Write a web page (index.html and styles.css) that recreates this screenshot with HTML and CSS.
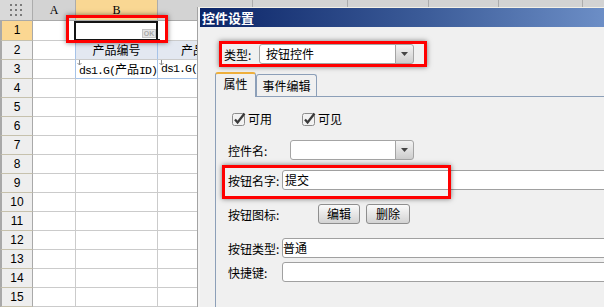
FILE: index.html
```html
<!DOCTYPE html>
<html lang="zh-CN">
<head>
    <meta charset="UTF-8">
    <meta name="viewport" content="width=device-width, initial-scale=1.0">
    <title>控件设置</title>
    <link rel="stylesheet" href="styles.css">
</head>
<body>
    <div class="sheet">
        <div class="sheet__head">
            <div class="col col--corner w-h">
                <svg width="12" height="12" viewBox="0 0 12 12">
                    <g fill="#7b7b7b">
                        <rect x="0" y="0" width="2" height="2"/><rect x="5" y="0" width="2" height="2"/><rect x="10" y="0" width="2" height="2"/>
                        <rect x="0" y="5" width="2" height="2"/><rect x="5" y="5" width="2" height="2"/><rect x="10" y="5" width="2" height="2"/>
                        <rect x="0" y="10" width="2" height="2"/><rect x="5" y="10" width="2" height="2"/><rect x="10" y="10" width="2" height="2"/>
                    </g>
                </svg>
            </div>
            <div class="col w-a">A</div>
            <div class="col col--sel w-b">B</div>
            <div class="col w-c"></div>
            <div class="col w-d"></div>
            <div class="col w-e"></div>
            <div class="col w-f"></div>
            <div class="col w-g"></div>
            <div class="col col--rest"></div>
        </div>

        <div class="row row--first">
            <div class="rh rh--sel">1</div>
            <div class="cell w-a"></div>
            <div class="cell w-b">
                <div class="editor">
                    <span class="editor__ok">OK</span>
                    <i class="editor__handle"></i>
                </div>
                <div class="hl hl--cell"></div>
            </div>
            <div class="cell w-c"></div>
        </div>
        <div class="row">
            <div class="rh">2</div>
            <div class="cell cell--edge w-a"></div>
            <div class="cell cell--title cell--edge w-b">产品编号</div>
            <div class="cell cell--title cell--cut w-c">产品</div>
        </div>
        <div class="row">
            <div class="rh">3</div>
            <div class="cell cell--edge w-a"></div>
            <div class="cell cell--data cell--edge cell--foot w-b">
                <svg class="drop" width="5" height="6" viewBox="0 0 5 6"><path d="M2.5 0v5M0.5 3l2 2 2-2" fill="none" stroke="#8a8a8a"/></svg>
                ds1.G(<span class="cjk">产品</span>ID)
            </div>
            <div class="cell cell--data cell--foot w-c">
                <svg class="drop" width="5" height="6" viewBox="0 0 5 6"><path d="M2.5 0v5M0.5 3l2 2 2-2" fill="none" stroke="#8a8a8a"/></svg>
                ds1.G(
            </div>
        </div>
        <div class="row"><div class="rh">4</div><div class="cell w-a"></div><div class="cell w-b"></div><div class="cell w-c"></div></div>
        <div class="row"><div class="rh">5</div><div class="cell w-a"></div><div class="cell w-b"></div><div class="cell w-c"></div></div>
        <div class="row"><div class="rh">6</div><div class="cell w-a"></div><div class="cell w-b"></div><div class="cell w-c"></div></div>
        <div class="row"><div class="rh">7</div><div class="cell w-a"></div><div class="cell w-b"></div><div class="cell w-c"></div></div>
        <div class="row"><div class="rh">8</div><div class="cell w-a"></div><div class="cell w-b"></div><div class="cell w-c"></div></div>
        <div class="row"><div class="rh">9</div><div class="cell w-a"></div><div class="cell w-b"></div><div class="cell w-c"></div></div>
        <div class="row"><div class="rh">10</div><div class="cell w-a"></div><div class="cell w-b"></div><div class="cell w-c"></div></div>
        <div class="row"><div class="rh">11</div><div class="cell w-a"></div><div class="cell w-b"></div><div class="cell w-c"></div></div>
        <div class="row"><div class="rh">12</div><div class="cell w-a"></div><div class="cell w-b"></div><div class="cell w-c"></div></div>
        <div class="row"><div class="rh">13</div><div class="cell w-a"></div><div class="cell w-b"></div><div class="cell w-c"></div></div>
        <div class="row"><div class="rh">14</div><div class="cell w-a"></div><div class="cell w-b"></div><div class="cell w-c"></div></div>
        <div class="row"><div class="rh">15</div><div class="cell w-a"></div><div class="cell w-b"></div><div class="cell w-c"></div></div>
    </div>

    <div class="dialog">
        <div class="dialog__title">控件设置</div>
        <div class="dialog__body">
            <div class="type-box">
                <span class="type-box__label">类型:</span>
                <div class="combo combo--type">
                    <div class="combo__text">按钮控件</div>
                    <div class="combo__btn">
                        <svg width="7" height="4" viewBox="0 0 7 4"><path d="M0 0h7L3.5 4z" fill="#454545"/></svg>
                    </div>
                </div>
            </div>

            <div class="tabs">
                <div class="tab tab--active">属性</div>
                <div class="tab">事件编辑</div>
            </div>

            <div class="panel">
                <div class="checks">
                    <label class="check">
                        <svg width="14" height="14" viewBox="0 0 14 14"><rect x="0.5" y="1.5" width="12" height="12" rx="2" fill="#f2f2f2" stroke="#8c8c8c"/><path d="M3 7.5l2.6 3L12.5 1.5" fill="none" stroke="#3a3a3a" stroke-width="2.3"/></svg>
                        可用
                    </label>
                    <label class="check">
                        <svg width="14" height="14" viewBox="0 0 14 14"><rect x="0.5" y="1.5" width="12" height="12" rx="2" fill="#f2f2f2" stroke="#8c8c8c"/><path d="M3 7.5l2.6 3L12.5 1.5" fill="none" stroke="#3a3a3a" stroke-width="2.3"/></svg>
                        可见
                    </label>
                </div>

                <div class="form-row form-row--name">
                    <span class="form-row__label label--name">控件名:</span>
                    <div class="combo combo--name">
                        <div class="combo__text"></div>
                        <div class="combo__btn">
                            <svg width="7" height="4" viewBox="0 0 7 4"><path d="M0 0h7L3.5 4z" fill="#454545"/></svg>
                        </div>
                    </div>
                </div>

                <div class="form-row form-row--marked">
                    <span class="form-row__label">按钮名字:</span>
                    <div class="field field--text">提交</div>
                </div>

                <div class="form-row form-row--icon">
                    <span class="form-row__label label--icon">按钮图标:</span>
                    <button class="btn btn--edit">编辑</button>
                    <button class="btn btn--delete">删除</button>
                </div>

                <div class="form-row form-row--kind">
                    <span class="form-row__label">按钮类型:</span>
                    <div class="field field--tight">普通</div>
                </div>

                <div class="form-row form-row--key">
                    <span class="form-row__label">快捷键:</span>
                    <div class="field"></div>
                </div>
            </div>
        </div>
    </div>
</body>
</html>
```

FILE: styles.css
```css
* {
    box-sizing: border-box;
    margin: 0;
    padding: 0;
}

body {
    width: 604px;
    height: 307px;
    overflow: hidden;
    position: relative;
    background-color: #fff;
    font-family: "Noto Sans CJK SC", sans-serif;
    font-size: 12px;
    color: #000;
}

/* spreadsheet */

.w-h { width: 33px; flex: none; }
.w-a { width: 43px; flex: none; }
.w-b { width: 82px; flex: none; }
.w-c { width: 95px; flex: none; }
.w-d { width: 95px; flex: none; }
.w-e { width: 81px; flex: none; }
.w-f { width: 70px; flex: none; }
.w-g { width: 84px; flex: none; }

.sheet__head {
    display: flex;
    height: 21px;
    background-color: #d3d3d3;
    border-bottom: 1px solid #a9a9a9;
}

.col {
    border-right: 1px solid #acacac;
    text-align: center;
    line-height: 20px;
    font-family: "Liberation Serif", serif;
    font-size: 12px;
}

.col--corner {
    display: flex;
    align-items: center;
    justify-content: center;
    background-color: #d9d9d9;
}

.col--sel {
    background-color: #f9d793;
}

.col--rest {
    flex: 1;
    border-right: none;
}

.row {
    display: flex;
    height: 19px;
}

.row--first {
    height: 20px;
}

.rh {
    width: 33px;
    flex: none;
    background-color: #eeeeee;
    border-left: 2px solid #a9a9a9;
    border-right: 1px solid #a9a9a9;
    border-bottom: 1px solid #c6c1ad;
    text-align: center;
    line-height: 18px;
    font-family: "Liberation Sans", sans-serif;
    font-size: 12px;
}

.rh--sel {
    background-color: #fbd792;
    line-height: 19px;
}

.cell {
    position: relative;
    border-right: 1px solid #cbcbcb;
    border-bottom: 1px solid #cbcbcb;
}

.cell--edge {
    border-right-color: #a6c3e8;
}

.cell--foot {
    border-bottom-color: #a6c3e8;
}

.cell--title {
    background-color: #e3e8f1;
    text-align: center;
    line-height: 18px;
}

.cell--cut {
    padding-left: 23px;
    text-align: left;
}

.cell--data {
    padding-left: 3px;
    white-space: nowrap;
    overflow: hidden;
    font-family: "Liberation Mono", monospace;
    font-size: 11.5px;
    letter-spacing: -0.9px;
    line-height: 18px;
}

.cjk {
    font-family: "Noto Sans CJK SC", sans-serif;
    font-size: 12px;
    letter-spacing: 0;
}

.drop {
    position: absolute;
    left: 1px;
    top: 0;
}

.editor {
    position: absolute;
    left: -2px;
    top: 0;
    width: 84px;
    height: 20px;
    background-color: #fff;
    border: 2px solid #141414;
    z-index: 1;
}

.editor__ok {
    position: absolute;
    right: 0;
    bottom: 1px;
    width: 14px;
    height: 9px;
    border: 1px solid #c4c4c4;
    background-color: #e4e4e4;
    color: #a8a8a8;
    font-family: "Liberation Sans", sans-serif;
    font-size: 7px;
    font-weight: bold;
    line-height: 7px;
    text-align: center;
}

.editor__handle {
    position: absolute;
    right: -4px;
    bottom: -4px;
    width: 4px;
    height: 4px;
    background-color: #141414;
}

.hl {
    border: 3px solid #ff0000;
    box-shadow: 0 0 5px rgba(0, 0, 0, 0.5);
}

.hl--cell {
    position: absolute;
    left: -10px;
    top: -6px;
    width: 102px;
    height: 28px;
    z-index: 2;
}

/* dialog */

.dialog {
    position: absolute;
    left: 198px;
    top: 7px;
    right: 0;
    bottom: 0;
    z-index: 3;
    overflow: hidden;
    background-color: #f0f0f0;
    border-top: 1px solid #f3f0e6;
    border-left: 2px solid #f4f4f4;
    box-shadow: -1px 0 0 #a3a3a3;
}

.dialog__title {
    height: 19px;
    padding-left: 2px;
    background: linear-gradient(to right, #0b2467, #3b5b98 55%, #6c8ec6);
    color: #fff;
    font-size: 13px;
    font-weight: bold;
    line-height: 19px;
}

.dialog__body {
    padding-left: 15px;
}

.type-box {
    display: flex;
    align-items: center;
    width: 208px;
    height: 26px;
    margin: 14px 0 0 4px;
    padding-left: 2px;
    border: 3px solid #ff0000;
    box-shadow: 0 0 5px rgba(0, 0, 0, 0.5);
}

.type-box__label {
    width: 35px;
    flex: none;
}

.combo {
    display: flex;
    height: 20px;
}

.combo--type {
    width: 155px;
}

.combo--name {
    width: 124px;
}

.combo__text {
    flex: 1;
    padding-left: 6px;
    background-color: #fff;
    border: 1px solid #a4a4a4;
    border-radius: 3px 0 0 3px;
    line-height: 18px;
}

.combo__btn {
    width: 19px;
    flex: none;
    display: flex;
    align-items: center;
    justify-content: center;
    margin-left: -1px;
    border: 1px solid #a4a4a4;
    border-radius: 0 3px 3px 0;
    background: linear-gradient(#f3f3f3, #cdcdcd);
}

.tabs {
    display: flex;
    align-items: flex-end;
    height: 24px;
    margin-top: 5px;
}

.tab {
    width: 61px;
    height: 22px;
    border: 1px solid #8c9fb8;
    border-bottom: none;
    border-radius: 3px 3px 0 0;
    text-align: center;
    line-height: 21px;
    background-color: #f0f0f0;
}

.tab--active {
    position: relative;
    z-index: 1;
    width: 41px;
    height: 25px;
    margin-bottom: -1px;
    border-top: 2px solid #eeaf3c;
    line-height: 20px;
}

.panel {
    height: 240px;
    padding: 14px 0 0 12px;
    border-top: 1px solid #8c9fb8;
    border-left: 1px solid #8c9fb8;
}

.checks {
    display: flex;
    align-items: center;
    height: 15px;
    margin-left: 4px;
}

.check {
    display: flex;
    align-items: center;
    gap: 2px;
    width: 70px;
}

.form-row {
    position: relative;
    display: flex;
    align-items: center;
    height: 20px;
    margin-right: -6px;
}

.form-row__label {
    width: 54px;
    flex: none;
    white-space: nowrap;
}

.label--name {
    width: 62px;
}

.label--icon {
    width: 90px;
}

.form-row--name {
    margin-top: 14px;
    margin-right: 0;
}

.form-row--marked {
    margin-top: 10px;
}

.form-row--marked::after {
    content: "";
    position: absolute;
    left: -6px;
    top: -5px;
    width: 223px;
    height: 28px;
    border: 3px solid #ff0000;
    box-shadow: 0 0 5px rgba(0, 0, 0, 0.5);
}

.form-row--icon {
    margin-top: 14px;
}

.form-row--kind {
    margin-top: 14px;
}

.form-row--key {
    margin-top: 4px;
}

.field {
    flex: 1;
    height: 20px;
    padding-left: 2px;
    background-color: #fff;
    border: 1px solid #a0a0a0;
    border-radius: 3px 0 0 3px;
    line-height: 18px;
}

.field--tight {
    padding-left: 0;
}

.btn {
    height: 20px;
    border: 1px solid #8e8e8e;
    border-radius: 3px;
    background: linear-gradient(#fafafa, #d3d3d3);
    font-family: "Noto Sans CJK SC", sans-serif;
    font-size: 12px;
    line-height: 18px;
    color: #000;
}

.btn--edit {
    width: 42px;
}

.btn--delete {
    width: 44px;
    margin-left: 6px;
}
```
